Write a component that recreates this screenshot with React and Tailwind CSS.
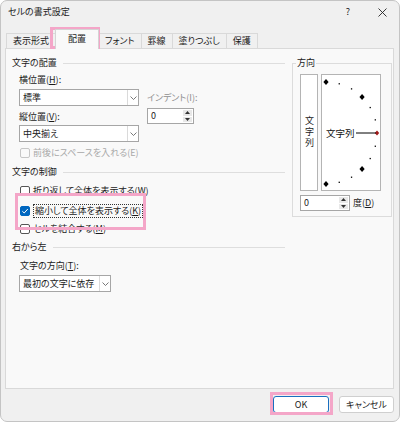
import React from "react";

const Up = () => (
  <svg width="5" height="3" viewBox="0 0 5 3"><path d="M0 3 L2.5 0 L5 3 Z" fill="#333" /></svg>
);
const Down = () => (
  <svg width="5" height="3" viewBox="0 0 5 3"><path d="M0 0 L2.5 3 L5 0 Z" fill="#333" /></svg>
);

function Select({ w, label }) {
  return (
    <div className={`flex h-[17px] ${w} items-center border border-[#a6a6a6] bg-white`}>
      <span className="flex-1 pl-[3px] leading-none">{label}</span>
      <span className="flex h-full w-[11px] items-center justify-center border-l border-[#dadada]">
        <svg width="7" height="4" viewBox="0 0 7 4">
          <path d="M0.5 0.5 L3.5 3.5 L6.5 0.5" fill="none" stroke="#555" strokeWidth="0.8" />
        </svg>
      </span>
    </div>
  );
}

function Spin({ w }) {
  return (
    <div className={`flex h-[16px] ${w} border border-[#a6a6a6] bg-white`}>
      <span className="flex-1 pl-[3px] leading-[14px]">0</span>
      <span className="my-[1px] mr-[1px] flex w-[9px] flex-col gap-px">
        <span className="flex flex-1 items-center justify-center bg-[#e8e8e8]"><Up /></span>
        <span className="flex flex-1 items-center justify-center bg-[#e8e8e8]"><Down /></span>
      </span>
    </div>
  );
}

function Check({ checked, disabled, focus, children }) {
  const box = checked
    ? "border-[#0067c0] bg-[#0067c0]"
    : disabled
    ? "border-[#c6c6c6] bg-[#f9f9f9]"
    : "border-[#555] bg-white";
  return (
    <div className="flex h-[14px] items-center">
      <span className={`mr-[3px] flex h-[10px] w-[10px] items-center justify-center rounded-[2px] border ${box}`}>
        {checked && (
          <svg width="8" height="8" viewBox="0 0 8 8">
            <path d="M1.3 4.2 L3.2 6 L6.8 2" fill="none" stroke="#fff" strokeWidth="1" />
          </svg>
        )}
      </span>
      <span className={`${disabled ? "text-[#a8a8a8]" : ""} ${focus ? "border border-dotted border-[#333] px-px leading-[12px]" : ""}`}>
        {children}
      </span>
    </div>
  );
}

function Group({ title }) {
  return (
    <div className="flex h-[14px] items-center">
      <span>{title}</span>
      <span className="ml-[6px] h-px flex-1 bg-[#dedede]" />
    </div>
  );
}

function Orientation() {
  const pts = [];
  for (let i = 0; i <= 12; i++) {
    const a = ((90 - i * 15) * Math.PI) / 180;
    pts.push({ x: 4 + 51 * Math.cos(a), y: 58 - 51 * Math.sin(a), i });
  }
  return (
    <svg width="58" height="115" viewBox="0 0 58 115">
      {pts.map((p) =>
        p.i === 6 ? (
          <polygon key={p.i} points={`${p.x},${p.y - 2.5} ${p.x + 2.2},${p.y} ${p.x},${p.y + 2.5} ${p.x - 2.2},${p.y}`} fill="#a01818" />
        ) : p.i % 3 === 0 ? (
          <polygon key={p.i} points={`${p.x},${p.y - 3} ${p.x + 2.6},${p.y} ${p.x},${p.y + 3} ${p.x - 2.6},${p.y}`} fill="#000" />
        ) : (
          <rect key={p.i} x={p.x - 0.6} y={p.y - 0.6} width="1.3" height="1.3" fill="#000" />
        )
      )}
      <line x1="34" y1="58" x2="54" y2="58" stroke="#000" strokeWidth="1" />
      <text x="4" y="61.5" fontSize="9.5" fill="#111" fontFamily="Noto Sans CJK JP, sans-serif">文字列</text>
    </svg>
  );
}

const tabs = ["表示形式", "配置", "フォント", "罫線", "塗りつぶし", "保護"];

export default function App() {
  return (
    <div className="relative h-[422px] w-[400px] font-['Noto_Sans_CJK_JP',sans-serif] text-[9px] text-[#1b1b1b] [font-feature-settings:'palt']">
      <div className="flex h-[422px] w-[400px] flex-col overflow-hidden rounded-[7px] border border-[#c4c4c4] bg-[#f0f0f0]">
        {/* title bar */}
        <div className="flex h-[27px] items-start pt-[4px] pl-[7px]">
          <span className="flex-1 leading-[14px]">セルの書式設定</span>
          <span className="w-[20px] text-center leading-[14px]">?</span>
          <span className="ml-[18px] mr-[11px] flex h-[14px] w-[12px] items-center justify-center">
            <svg width="9" height="9" viewBox="0 0 9 9">
              <path d="M0.5 0.5 L8.5 8.5 M8.5 0.5 L0.5 8.5" stroke="#222" strokeWidth="0.9" />
            </svg>
          </span>
        </div>

        {/* tabs */}
        <div className="flex h-[20px] items-end pl-[5px]">
          {tabs.map((t) =>
            t === "配置" ? (
              <div key={t} className="relative z-10 -mb-px -ml-px flex h-[20px] items-center border border-b-0 border-[#d4d4d4] bg-[#f9f9f9] px-[12px] pb-[1px]">
                {t}
              </div>
            ) : (
              <div key={t} className="-ml-px flex h-[15px] items-center border border-b-0 border-[#d9d9d9] px-[6px] first:ml-0">
                {t}
              </div>
            )
          )}
        </div>

        {/* panel */}
        <div className="ml-[4px] flex h-[341px] w-[389px] border border-[#d9d9d9] bg-[#f9f9f9]">
          <div className="flex-1 pl-[6px] pr-[7px]">
            <div className="mt-[7px]"><Group title="文字の配置" /></div>
            <div className="flex pl-[7px]">
              <div>
                <div className="mt-[3px] h-[14px] leading-[14px]">横位置(<span className="underline">H</span>):</div>
                <div className="mt-[2px]"><Select w="w-[120px]" label="標準" /></div>
                <div className="mt-[4px] h-[14px] leading-[14px]">縦位置(<span className="underline">V</span>):</div>
                <div className="mt-[1px]"><Select w="w-[120px]" label="中央揃え" /></div>
              </div>
              <div className="ml-[8px] pt-[21px]">
                <div className="h-[14px] leading-[14px] text-[#8f8f8f]">インデント(I):</div>
                <div className="mt-[3px]"><Spin w="w-[47px]" /></div>
              </div>
            </div>
            <div className="mt-[4px] pl-[8px]">
              <Check disabled>前後にスペースを入れる(E)</Check>
            </div>
            <div className="mt-[5px]"><Group title="文字の制御" /></div>
            <div className="mt-[5px] pl-[8px]">
              <Check>折り返して全体を表示する(<span className="underline">W</span>)</Check>
            </div>
            <div className="mt-[6px] pl-[8px]">
              <Check checked focus>縮小して全体を表示する(<span className="underline">K</span>)</Check>
            </div>
            <div className="mt-[4px] pl-[8px]">
              <Check>セルを結合する(<span className="underline">M</span>)</Check>
            </div>
            <div className="mt-[4px]"><Group title="右から左" /></div>
            <div className="mt-[5px] h-[14px] pl-[8px] leading-[14px]">文字の方向(<span className="underline">T</span>):</div>
            <div className="mt-[2px] pl-[7px]"><Select w="w-[92px]" label="最初の文字に依存" /></div>
          </div>

          {/* orientation group */}
          <div className="relative mt-[14px] mr-[1px] h-[154px] w-[100px] border border-[#dcdcdc] pt-[10px] pl-[7px]">
            <span className="absolute -top-[8px] left-[3px] bg-[#f9f9f9] px-px leading-[14px]">方向</span>
            <div className="flex gap-[3px]">
              <div className="flex h-[117px] w-[18px] items-center justify-center border border-[#b4b4b4] bg-white">
                <span className="leading-[12px] tracking-[2px] [writing-mode:vertical-rl]">文字列</span>
              </div>
              <div className="h-[117px] w-[60px] border border-[#b4b4b4] bg-white">
                <Orientation />
              </div>
            </div>
            <div className="mt-[4px] flex items-center">
              <Spin w="w-[50px]" />
              <span className="ml-[3px]">度(<span className="underline">D</span>)</span>
            </div>
          </div>
        </div>

        {/* footer */}
        <div className="flex justify-end gap-[10px] pt-[7px] pr-[5px]">
          <button className="h-[17px] w-[56px] rounded-[3px] border border-[#1a6fc0] bg-white leading-none">OK</button>
          <button className="h-[17px] w-[55px] rounded-[3px] border border-[#cfcfcf] bg-white leading-none">キャンセル</button>
        </div>
      </div>

      {/* highlight overlays */}
      <div className="absolute left-[50px] top-[27px] h-[22px] w-[50px] border-[3px] border-[#f4a6c8]" />
      <div className="absolute left-[15px] top-[193px] h-[37px] w-[131px] border-[3px] border-[#f4a6c8]" />
      <div className="absolute left-[270px] top-[392px] h-[23px] w-[63px] border-[3px] border-[#f4a6c8]" />
    </div>
  );
}
